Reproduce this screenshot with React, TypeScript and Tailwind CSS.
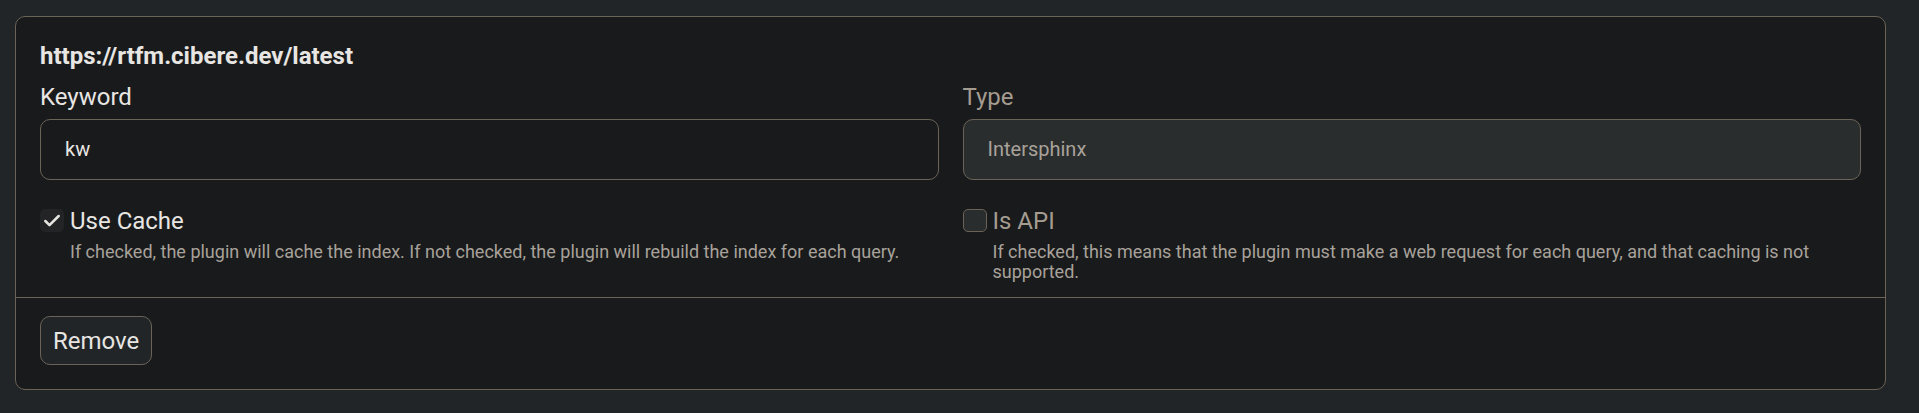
import { Check } from "lucide-react";

const font = { fontFamily: "Roboto, 'Noto Sans', sans-serif" };

export default function App() {
  return (
    <div className="min-h-[413px] w-full bg-[#212527] pl-[15px] pr-[33px] pt-[16px]" style={font}>
      <div className="rounded-[10px] border border-[#6b6357] bg-[#191a1c] text-[#e8e6e3]">
        <div className="px-[24px] pt-[25px] pb-[15px]">
          <h5 className="text-[24px] font-bold leading-[1.2]">https://rtfm.cibere.dev/latest</h5>

          <div className="mt-[12px] grid grid-cols-2 gap-x-[24px]">
            <div>
              <label className="block text-[24px] leading-[1.2]">Keyword</label>
              <div className="mt-[7px] flex h-[61px] items-center rounded-[10px] border border-[#6b6357] bg-[#191a1c] px-[24px] text-[20px]">
                kw
              </div>
            </div>
            <div>
              <label className="block text-[24px] leading-[1.2] text-[#a59c90]">Type</label>
              <div className="mt-[7px] flex h-[61px] items-center rounded-[10px] border border-[#6b6357] bg-[#2a2d2e] px-[24px] text-[20px] text-[#a8a29a]">
                Intersphinx
              </div>
            </div>

            <div className="mt-[27px]">
              <div className="flex items-center gap-[6px]">
                <span className="flex h-[23px] w-[24px] items-center justify-center rounded-[5px] bg-[#222426]">
                  <Check className="h-[20px] w-[20px] text-[#e8e6e3]" strokeWidth={3} />
                </span>
                <span className="text-[24px] leading-[1.2]">Use Cache</span>
              </div>
              <p className="mt-[7px] pl-[30px] text-[18px] leading-[20px] text-[#a8a29a]">
                If checked, the plugin will cache the index. If not checked, the plugin will rebuild the index for each query.
              </p>
            </div>
            <div className="mt-[27px]">
              <div className="flex items-center gap-[6px]">
                <span className="h-[23px] w-[24px] rounded-[5px] border border-[#6b6357] bg-[#2a2d2e]" />
                <span className="text-[24px] leading-[1.2] text-[#a59c90]">Is API</span>
              </div>
              <p className="mt-[7px] pl-[30px] text-[18px] leading-[20px] text-[#a8a29a]">
                If checked, this means that the plugin must make a web request for each query, and that caching is not supported.
              </p>
            </div>
          </div>
        </div>

        <div className="border-t border-[#6b6357] px-[24px] pt-[18px] pb-[24px]">
          <button className="flex h-[49px] items-center rounded-[10px] border border-[#6b6357] bg-[#212527] px-[12px] text-[24px] text-[#e8e6e3]">
            Remove
          </button>
        </div>
      </div>
    </div>
  );
}
